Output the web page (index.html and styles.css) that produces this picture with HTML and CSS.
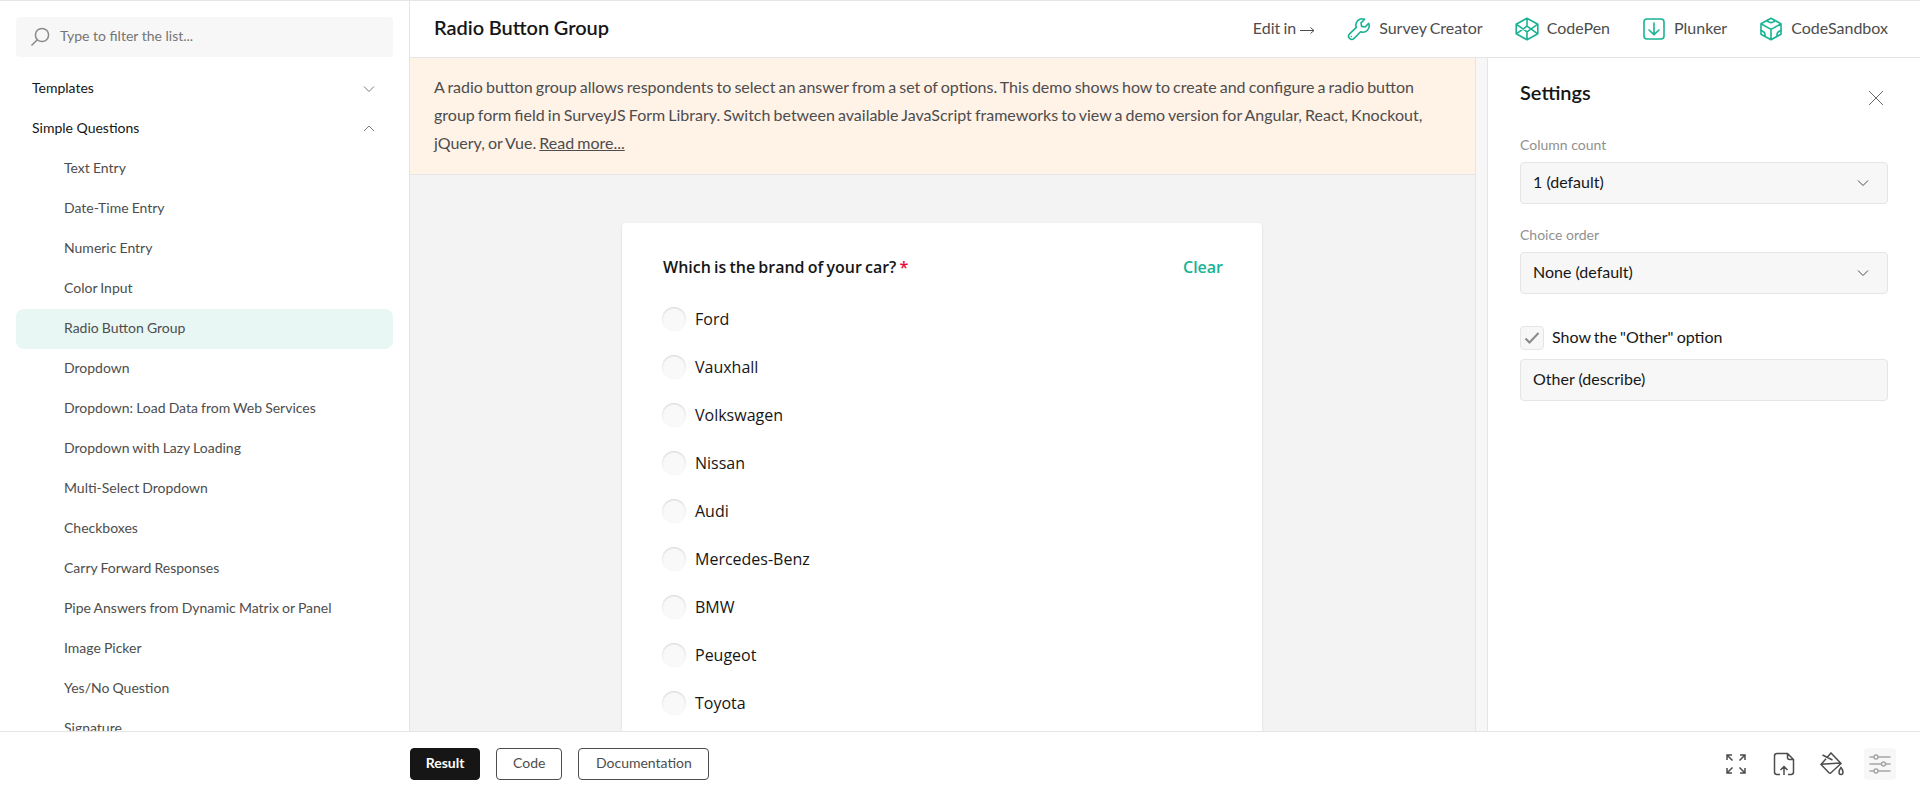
FILE: index.html
```html
<!DOCTYPE html>
<html lang="en">
<head>
<meta charset="utf-8">
<title>Radio Button Group</title>
<link rel="stylesheet" href="styles.css">
</head>
<body>
<div class="app">
  <div class="workspace">
    <nav class="sidebar">
      <div class="search">
        <svg class="search-icon" width="20" height="20" viewBox="0 0 20 20"><circle cx="12" cy="8" r="6.6"/><path d="M7.3 12.7 1.5 18.5"/></svg>
        <span>Type to filter the list...</span>
      </div>
      <div class="group"><span>Templates</span><svg width="12" height="8" viewBox="0 0 12 8"><path d="M1 1.5 6 6.5 11 1.5"/></svg></div>
      <div class="group"><span>Simple Questions</span><svg width="12" height="8" viewBox="0 0 12 8"><path d="M1 6 6 1 11 6"/></svg></div>
      <ul class="items">
        <li>Text Entry</li>
        <li>Date-Time Entry</li>
        <li>Numeric Entry</li>
        <li>Color Input</li>
        <li class="active">Radio Button Group</li>
        <li>Dropdown</li>
        <li>Dropdown: Load Data from Web Services</li>
        <li>Dropdown with Lazy Loading</li>
        <li>Multi-Select Dropdown</li>
        <li>Checkboxes</li>
        <li>Carry Forward Responses</li>
        <li>Pipe Answers from Dynamic Matrix or Panel</li>
        <li>Image Picker</li>
        <li>Yes/No Question</li>
        <li>Signature</li>
      </ul>
    </nav>
    <div class="main">
      <header class="header">
        <h1>Radio Button Group</h1>
        <div class="links">
          <span class="link"><span>Edit in</span> <svg class="arrow" width="15" height="8" viewBox="0 0 15 8"><path d="M0 4.500H14M10.500 1.500 14 4.500 10.500 7.500"/></svg></span>
          <span class="link"><svg class="brand" width="24" height="24" viewBox="0 0 24 24"><path d="M17.6 2.300A6.300 6.300 0 0 0 9.300 10.400L2.600 16.900A2.900 2.900 0 1 0 7.100 21.400L13.600 14.700A6.300 6.300 0 0 0 21.700 6.400L18.100 10 14.600 9.400 14 5.900Z"/><path d="M4.500 19.500h.01"/></svg><span>Survey Creator</span></span>
          <span class="link"><svg class="brand" width="24" height="24" viewBox="0 0 24 24"><path d="M12 1.2 22.8 7.2V16.8L12 22.8 1.2 16.8V7.2ZM1.2 7.2 12 14.8 22.8 7.2M1.2 16.8 12 9.2 22.8 16.8M12 1.2V9.2M12 14.8V22.8"/></svg><span>CodePen</span></span>
          <span class="link"><svg class="brand" width="24" height="24" viewBox="0 0 24 24"><rect x="2" y="2" width="20" height="20" rx="3"/><path d="M12 6V17.5M7 13 12 17.7 17 13"/></svg><span>Plunker</span></span>
          <span class="link"><svg class="brand" width="24" height="24" viewBox="0 0 24 24"><path d="M12 1.2 22 6.8V17.2L12 22.8 2 17.2V6.8ZM2 6.8 12 12.4 22 6.8M12 12.4V22.8"/><path d="M8.600 3.200V4.400Q12 6.800 15.400 4.400V3.200M2 13.600 3.400 14Q6 15.500 6 17.200V19.300M22 13.600 20.600 14Q18 15.500 18 17.200V19.300"/></svg><span>CodeSandbox</span></span>
        </div>
      </header>
      <div class="body">
        <div class="demo">
          <p class="description">A radio button group allows respondents to select an answer from a set of options. This demo shows how to create and configure a radio button<br>group form field in SurveyJS Form Library. Switch between available JavaScript frameworks to view a demo version for Angular, React, Knockout,<br>jQuery, or Vue. <a>Read more...</a></p>
          <section class="stage">
            <div class="card">
              <div class="question"><span>Which is the brand of your car? <b>*</b></span><span class="clear">Clear</span></div>
              <div class="choice"><i></i>Ford</div>
              <div class="choice"><i></i>Vauxhall</div>
              <div class="choice"><i></i>Volkswagen</div>
              <div class="choice"><i></i>Nissan</div>
              <div class="choice"><i></i>Audi</div>
              <div class="choice"><i></i>Mercedes-Benz</div>
              <div class="choice"><i></i>BMW</div>
              <div class="choice"><i></i>Peugeot</div>
              <div class="choice"><i></i>Toyota</div>
            </div>
          </section>
        </div>
        <div class="splitter"></div>
        <aside class="settings">
          <div class="settings-head"><h2>Settings</h2><svg width="16" height="16" viewBox="0 0 16 16"><path d="M1 1 15 15M15 1 1 15"/></svg></div>
          <label class="label">Column count</label>
          <div class="field first">1 (default)<svg width="12" height="8" viewBox="0 0 12 8"><path d="M1 1.5 6 6.5 11 1.5"/></svg></div>
          <label class="label">Choice order</label>
          <div class="field second">None (default)<svg width="12" height="8" viewBox="0 0 12 8"><path d="M1 1.5 6 6.5 11 1.5"/></svg></div>
          <div class="check"><span class="box"><svg width="16" height="14" viewBox="0 0 16 14"><path d="M1.5 7.5 5.5 11.5 14.5 2"/></svg></span><span class="check-text">Show the "Other" option</span></div>
          <div class="field">Other (describe)</div>
        </aside>
      </div>
    </div>
  </div>
  <footer class="footer">
    <div class="tabs">
      <span class="tab selected">Result</span>
      <span class="tab">Code</span>
      <span class="tab wide">Documentation</span>
    </div>
    <div class="tools">
      <span class="tool"><svg width="24" height="24" viewBox="0 0 24 24"><path d="M8.5 8.5 3 3M3 8V3H8M15.500 8.500 21 3M16 3H21V8M8.500 15.500 3 21M3 16V21H8M15.500 15.500 21 21M21 16V21H16"/></svg></span>
      <span class="tool"><svg width="24" height="24" viewBox="0 0 24 24"><path d="M8 22.500H5Q2.500 22.500 2.500 20V4Q2.500 1.500 5 1.500H15.500L21.500 7.500V20Q21.500 22.500 19 22.500H16M15.500 1.500V5.500Q15.500 7.500 17.500 7.500H21.500M12 23V15M8.500 18 12 14.500 15.500 18"/></svg></span>
      <span class="tool"><svg width="24" height="24" viewBox="0 0 24 24"><path d="M2.500 3 12.500 8M7.500 5 11 1 21 11.500 10.500 21.200Q9.800 21.500 9 20.800L1 12.500 6 6.800M1 12.200 20.500 11"/><path d="M21 15.500Q23 18 23 20.300A2 2.300 0 0 1 19 20.300Q19 18 21 15.500Z"/></svg></span>
      <span class="tool on"><svg width="24" height="24" viewBox="0 0 24 24"><path d="M1.500 5H6M10 5H22.500M1.500 12H13.500M17.500 12H22.500M1.500 19H6M10 19H22.500"/><circle cx="8" cy="5" r="2"/><circle cx="15.500" cy="12" r="2"/><circle cx="8" cy="19" r="2"/></svg></span>
    </div>
  </footer>
</div>
</body>
</html>
```
FILE: styles.css
```css
* { box-sizing: border-box; }
body { margin: 0; font-family: Lato, "Open Sans", sans-serif; color: #4d4d4d; background: #fff; }
svg { fill: none; flex: none; }
h1, h2, p, ul { margin: 0; padding: 0; }
.app { height: 796px; display: flex; flex-direction: column; border-top: 1px solid #e5e5e5; overflow: hidden; }
.workspace { height: 730px; display: flex; overflow: hidden; flex: none; }

.sidebar { width: 410px; flex: none; padding: 16px 16px 0; border-right: 1px solid #e5e5e5; font-size: 14px; overflow: hidden; }
.search { height: 40px; margin-bottom: 12px; padding: 0 14px; display: flex; align-items: center; gap: 10px; background: #f7f7f7; border-radius: 4px; color: #757575; line-height: 20px; font-size: 14px; }
.search span { padding-bottom: 2px; }
.search-icon { stroke: #8a8a8a; stroke-width: 1.500; }
.group { height: 40px; padding: 0 18px 0 16px; display: flex; align-items: center; justify-content: space-between; color: #161616; }
.group span { padding-bottom: 3px; }
.items { list-style: none; word-spacing: -0.500px; }
.group svg { stroke: #7a7a7a; }
.items li { height: 40px; padding-left: 48px; line-height: 38px; border-radius: 8px; }
.items .active { background: #e8f7f4; }

.main { flex: 1; display: flex; flex-direction: column; min-width: 0; }
.header { height: 57px; flex: none; padding: 0 32px 0 24px; display: flex; align-items: center; justify-content: space-between; border-bottom: 1px solid #e5e5e5; }
.header h1 { font-size: 20px; line-height: 28px; font-weight: 600; color: #161616; padding-bottom: 4px; word-spacing: -0.500px; }
.links { display: flex; gap: 32px; font-size: 16px; line-height: 22px; word-spacing: -1px; }
.link { display: flex; align-items: center; gap: 8px; white-space: nowrap; height: 24px; }
.link span { padding-bottom: 2px; }
.link .arrow { margin: 2px 0 0 -4px; stroke: #4d4d4d; }
.brand { stroke: #19b394; stroke-width: 1.600; stroke-linejoin: round; stroke-linecap: round; }
.body { flex: 1; display: flex; min-height: 0; }
.demo { flex: 1; display: flex; flex-direction: column; border-right: 1px solid #e5e5e5; min-width: 0; }
.description { height: 117px; flex: none; padding: 15px 24px 16px; background: #fff2e7; border-bottom: 1px solid #e5e5e5; font-size: 16px; line-height: 28px; white-space: nowrap; word-spacing: -1px; }
.description a { text-decoration: underline; }
.stage { flex: 1; min-height: 0; padding: 48px 1px 0 0; background: #f3f3f3; display: flex; justify-content: center; overflow: hidden; }
.card { width: 640px; height: 600px; padding: 32px 40px; background: #fff; border-radius: 4px; box-shadow: 0 1px 2px rgba(0,0,0,.15); font-family: "Open Sans", sans-serif; color: #161616; font-size: 16px; }
.question { height: 24px; margin: 0 -1px 16px 1px; display: flex; justify-content: space-between; line-height: 24px; font-weight: 600; word-spacing: -1px; }
.question b { color: #e60a3e; font-weight: 600; }
.clear { color: #19b394; }
.choice { height: 48px; display: flex; align-items: center; gap: 9px; }
.choice i { width: 24px; height: 24px; border-radius: 50%; background: #f9f9f9; box-shadow: inset 0 1px 2px rgba(0,0,0,.15); }
.splitter { width: 12px; flex: none; background: #f7f7f7; border-right: 1px solid #e5e5e5; }
.settings { width: 432px; flex: none; padding: 20px 32px; font-size: 16px; color: #161616; word-spacing: -1px; }
.settings-head { height: 56px; display: flex; justify-content: space-between; }
.settings h2 { font-size: 20px; line-height: 28px; font-weight: 600; }
.settings-head svg { margin: 12px 4px 0; stroke: #6a6a6a; }
.label { display: block; height: 28px; font-size: 14px; line-height: 22px; color: #909090; word-spacing: 0; }
.field { height: 42px; padding: 0 18px 3px 12px; display: flex; align-items: center; justify-content: space-between; border: 1px solid #e5e5e5; border-radius: 4px; background: #f7f7f7; word-spacing: 0; }
.field svg { stroke: #4d4d4d; margin-top: 2px; }
.first { margin-bottom: 20px; }
.second { margin-bottom: 32px; }
.check { height: 24px; margin-bottom: 9px; display: flex; align-items: center; gap: 8px; }
.check-text { padding-bottom: 3px; }
.box { width: 24px; height: 24px; display: flex; align-items: center; justify-content: center; border: 1px solid #e5e5e5; border-radius: 4px; background: #f7f7f7; }
.box svg { stroke: #8a8a8a; stroke-width: 2; }

.footer { flex: 1; padding: 16px 24px 16px 410px; display: flex; justify-content: space-between; border-top: 1px solid #e5e5e5; }
.tabs, .tools { display: flex; gap: 16px; }
.tab { height: 32px; padding: 0 16px; border: 1px solid #4d4d4d; border-radius: 4px; font-size: 14px; line-height: 28px; }
.selected { width: 70px; padding: 0; text-align: center; background: #161616; border-color: #161616; color: #fff; font-weight: 700; }
.wide { width: 131px; padding: 0; text-align: center; }
.tool { width: 32px; height: 32px; display: flex; align-items: center; justify-content: center; border-radius: 4px; }
.tool svg { stroke: #4d4d4d; stroke-width: 1.500; }
.on { background: #f7f7f7; }
.tool.on svg { stroke: #a6a6a6; }
```
